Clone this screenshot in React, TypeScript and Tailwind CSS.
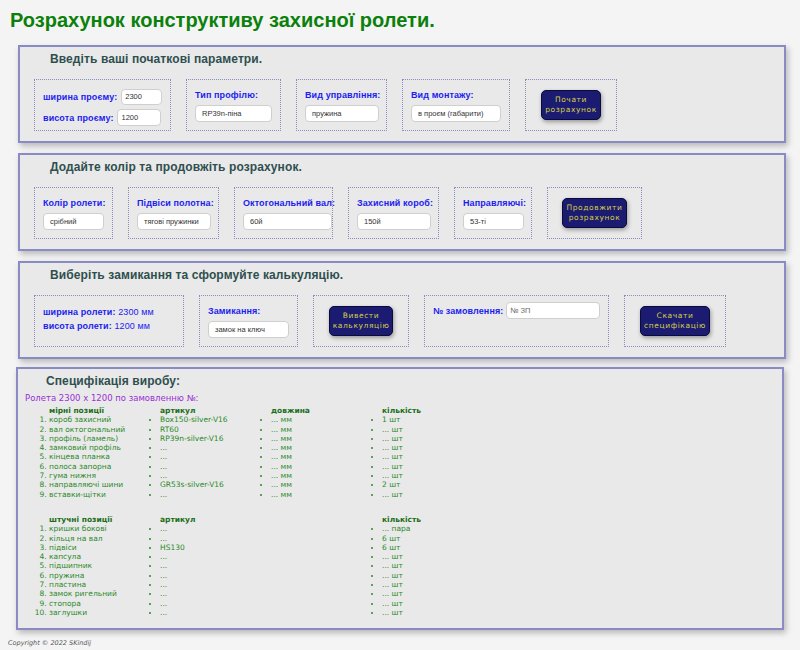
import React from 'react';

const sans = "font-['Liberation_Sans',Tahoma,Arial,sans-serif]";
const verdana = "font-['DejaVu_Sans',Verdana,sans-serif]";

const Panel = ({ title, children }: { title: string; children: React.ReactNode }) => (
  <section className="ml-[18px] w-[768px] border-2 border-[#8a8ac4] bg-[#e9e9e9] shadow-[2px_3px_6px_rgba(0,0,0,0.25)] px-[14px] pt-[4px] pb-[10px]">
    <h2 className="pl-[16px] text-[12px] font-bold text-[#2f4f4f] leading-[16px] tracking-[0.1px]">{title}</h2>
    <div className="mt-[12px] flex gap-[15px]">{children}</div>
  </section>
);

const Box = ({ w, children, center }: { w: string; children: React.ReactNode; center?: boolean }) => (
  <div
    className={`h-[52px] border border-dotted border-[#8c8cc0] ${w} ${
      center ? 'flex items-center justify-center' : 'px-[8px] pt-[9px]'
    }`}
  >
    {children}
  </div>
);

const Label = ({ children }: { children: React.ReactNode }) => (
  <div className="whitespace-nowrap text-[9px] font-bold text-[#1c1cf0] leading-[12px] tracking-[0.1px]">{children}</div>
);

const Field = ({ value, w }: { value: string; w: string }) => (
  <div className={`mt-[4px] h-[17px] ${w} whitespace-nowrap rounded-[4px] border border-[#cfcfcf] bg-white px-[6px] text-[7.5px] leading-[15px] text-[#333]`}>
    {value}
  </div>
);

const Btn = ({ children }: { children: React.ReactNode }) => (
  <button className={`${verdana} rounded-[5px] border border-[#0b0b3a] bg-[#1b1b72] px-[3px] py-[4px] text-[7.5px] leading-[10px] tracking-[0.6px] text-[#d6cf45] shadow-[1px_2px_4px_rgba(0,0,0,0.35)]`}>
    {children}
  </button>
);

const measured = [
  ['короб захисний', 'Box150-silver-V16', '... мм', '1 шт'],
  ['вал октогональний', 'RT60', '... мм', '... шт'],
  ['профіль (ламель)', 'RP39n-silver-V16', '... мм', '... шт'],
  ['замковий профіль', '...', '... мм', '... шт'],
  ['кінцева планка', '...', '... мм', '... шт'],
  ['полоса запорна', '...', '... мм', '... шт'],
  ['гума нижня', '...', '... мм', '... шт'],
  ['направляючі шини', 'GR53s-silver-V16', '... мм', '2 шт'],
  ['вставки-щітки', '...', '... мм', '... шт'],
];

const pieces = [
  ['кришки бокові', '...', '... пара'],
  ['кільця на вал', '...', '6 шт'],
  ['підвіси', 'HS130', '6 шт'],
  ['капсула', '...', '... шт'],
  ['підшипник', '...', '... шт'],
  ['пружина', '...', '... шт'],
  ['пластина', '...', '... шт'],
  ['замок ригельний', '...', '... шт'],
  ['стопора', '...', '... шт'],
  ['заглушки', '...', '... шт'],
];

const Col = ({ head, items, ordered }: { head: string; items: string[]; ordered?: boolean }) => (
  <div className="w-[111px]">
    <div className="font-bold text-[#1a6e1a]">{head}</div>
    {ordered ? (
      <ol className="list-decimal">
        {items.map((t, i) => (
          <li key={i}>{t}</li>
        ))}
      </ol>
    ) : (
      <ul className="list-disc">
        {items.map((t, i) => (
          <li key={i}>{t}</li>
        ))}
      </ul>
    )}
  </div>
);

const App = () => {
  return (
    <div className={`min-h-[650px] bg-[#f4f4f4] ${sans}`}>
      <h1 className="px-[10px] pt-[7px] pb-[12px] text-[20px] font-bold leading-[26px] text-[#0b800b]">
        Розрахунок конструктиву захисної ролети.
      </h1>

      <div className="flex flex-col gap-[10px]">
        <Panel title="Введіть ваші початкові параметри.">
          <Box w="w-[137px]">
            <div className="flex items-center gap-[4px]">
              <Label>ширина проєму:</Label>
              <div className="h-[16px] w-[44px] rounded-[4px] border border-[#cfcfcf] bg-white px-[3px] text-[7.5px] leading-[14px] text-[#333]">2300</div>
            </div>
            <div className="mt-[4px] flex items-center gap-[4px]">
              <Label>висота проєму:</Label>
              <div className="h-[17px] w-[44px] rounded-[4px] border border-[#cfcfcf] bg-white px-[3px] text-[7.5px] leading-[15px] text-[#333]">1200</div>
            </div>
          </Box>
          <Box w="w-[95px]">
            <Label>Тип профілю:</Label>
            <Field value="RP39n-піна" w="w-[77px]" />
          </Box>
          <Box w="w-[91px]">
            <Label>Вид управління:</Label>
            <Field value="пружина" w="w-[74px]" />
          </Box>
          <Box w="w-[108px]">
            <Label>Вид монтажу:</Label>
            <Field value="в проєм (габарити)" w="w-[90px]" />
          </Box>
          <Box w="w-[92px]" center>
            <Btn>
              Почати
              <br />
              розрахунок
            </Btn>
          </Box>
        </Panel>

        <Panel title="Додайте колір та продовжіть розрахунок.">
          <Box w="w-[79px]">
            <Label>Колір ролети:</Label>
            <Field value="срібний" w="w-[61px]" />
          </Box>
          <Box w="w-[91px]">
            <Label>Підвіси полотна:</Label>
            <Field value="тягові пружинки" w="w-[74px]" />
          </Box>
          <Box w="w-[99px]">
            <Label>Октогональний вал:</Label>
            <Field value="60й" w="w-[89px]" />
          </Box>
          <Box w="w-[91px]">
            <Label>Захисний короб:</Label>
            <Field value="150й" w="w-[74px]" />
          </Box>
          <Box w="w-[78px]">
            <Label>Направляючі:</Label>
            <Field value="53-ті" w="w-[61px]" />
          </Box>
          <Box w="w-[95px]" center>
            <Btn>
              Продовжити
              <br />
              розрахунок
            </Btn>
          </Box>
        </Panel>

        <Panel title="Виберіть замикання та сформуйте калькуляцію.">
          <Box w="w-[150px]">
            <div className="whitespace-nowrap text-[9px] leading-[14px] tracking-[0.1px] text-[#1c1cf0]">
              <div>
                <b>ширина ролети:</b> 2300 мм
              </div>
              <div>
                <b>висота ролети:</b> 1200 мм
              </div>
            </div>
          </Box>
          <Box w="w-[99px]">
            <Label>Замикання:</Label>
            <Field value="замок на ключ" w="w-[81px]" />
          </Box>
          <Box w="w-[96px]" center>
            <Btn>
              Вивести
              <br />
              калькуляцію
            </Btn>
          </Box>
          <div className="h-[52px] w-[185px] border border-dotted border-[#8c8cc0] px-[8px] pt-[6px]">
            <div className="flex items-start gap-[3px]">
              <div className="pt-[3px]">
                <Label>№ замовлення:</Label>
              </div>
              <div className="h-[17px] w-[97px] rounded-[4px] border border-[#cfcfcf] bg-white px-[3px] text-[7.5px] leading-[15px] text-[#666]">№ ЗП</div>
            </div>
          </div>
          <Box w="w-[102px]" center>
            <Btn>
              Скачати
              <br />
              специфікацію
            </Btn>
          </Box>
        </Panel>

        <section className="-mt-[2px] ml-[16px] h-[263px] w-[768px] border-2 border-[#8a8ac4] bg-[#e9e9e9] shadow-[2px_3px_6px_rgba(0,0,0,0.25)] pt-[4px]">
          <h2 className="pl-[28px] text-[12px] font-bold leading-[16px] tracking-[0.1px] text-[#2f4f4f]">Специфікація виробу:</h2>
          <div className={`${verdana} mt-[3px] pl-[7px] text-[8.5px] leading-[12px] text-[#9a2fd6]`}>Ролета 2300 x 1200 по замовленню №:</div>
          <div className={`${verdana} mt-[2px] pl-[31px] text-[7.5px] leading-[9.3px] text-[#2a8a2a]`}>
            <div className="flex">
              <Col head="мірні позиції" items={measured.map((r) => r[0])} ordered />
              <Col head="артикул" items={measured.map((r) => r[1])} />
              <Col head="довжина" items={measured.map((r) => r[2])} />
              <Col head="кількість" items={measured.map((r) => r[3])} />
            </div>
            <div className="mt-[16px] flex">
              <Col head="штучні позиції" items={pieces.map((r) => r[0])} ordered />
              <Col head="артикул" items={pieces.map((r) => r[1])} />
              <div className="w-[111px]" />
              <Col head="кількість" items={pieces.map((r) => r[2])} />
            </div>
          </div>
        </section>
      </div>

      <div className={`${verdana} px-[8px] pt-[9px] pb-[2px] text-[6.5px] italic text-[#555]`}>Copyright © 2022 SKindij</div>
    </div>
  );
};

export default App;
